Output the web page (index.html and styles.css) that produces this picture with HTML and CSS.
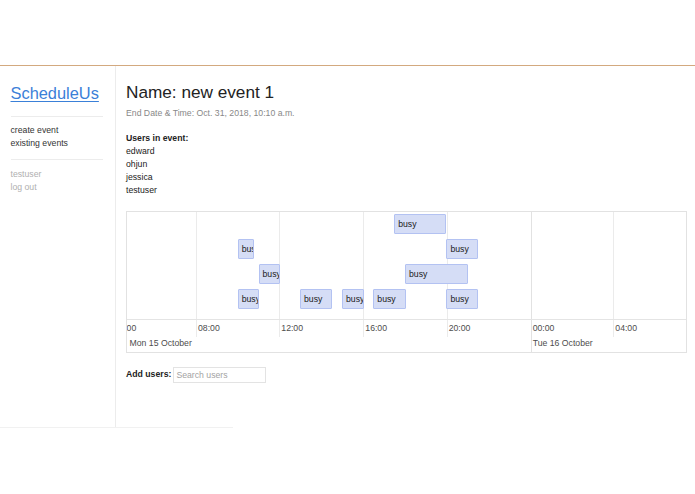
FILE: index.html
```html
<!DOCTYPE html>
<html lang="en">
<head>
<meta charset="utf-8">
<title>ScheduleUs</title>
<link rel="stylesheet" href="styles.css">
</head>
<body>
<header class="topbar"></header>
<div class="layout">
  <aside class="sidebar">
    <a class="logo" href="#">ScheduleUs</a>
    <hr class="rule">
    <nav class="nav">
      <a href="#">create event</a>
      <a href="#">existing events</a>
    </nav>
    <hr class="rule rule-second">
    <div class="account">
      <a href="#">testuser</a>
      <a href="#">log out</a>
    </div>
  </aside>
  <main class="main">
    <h1 class="title">Name: new event 1</h1>
    <p class="meta">End Date &amp; Time: Oct. 31, 2018, 10:10 a.m.</p>
    <div class="users">
      <strong class="users-head">Users in event:</strong>
      <ul class="user-list">
        <li>edward</li>
        <li>ohjun</li>
        <li>jessica</li>
        <li>testuser</li>
      </ul>
    </div>
    <div class="timeline">
      <div class="grid minor" style="left:-14.5px"></div>
      <div class="grid minor" style="left:69px"></div>
      <div class="grid minor" style="left:152.3px"></div>
      <div class="grid minor" style="left:236.3px"></div>
      <div class="grid minor" style="left:319.7px"></div>
      <div class="grid major" style="left:403.7px"></div>
      <div class="grid minor" style="left:486.3px"></div>
      <div class="axis-line"></div>

      <div class="item" style="top:2px;left:267.2px;width:52.2px">busy</div>
      <div class="item" style="top:27px;left:110.7px;width:16px">busy</div>
      <div class="item" style="top:27px;left:319.4px;width:31.5px">busy</div>
      <div class="item" style="top:52px;left:131.5px;width:21.5px">busy</div>
      <div class="item" style="top:52px;left:278px;width:62.6px">busy</div>
      <div class="item" style="top:77px;left:110.7px;width:21.5px">busy</div>
      <div class="item" style="top:77px;left:173px;width:32px">busy</div>
      <div class="item" style="top:77px;left:215px;width:21.7px">busy</div>
      <div class="item" style="top:77px;left:246.3px;width:32.4px">busy</div>
      <div class="item" style="top:77px;left:319.4px;width:31.5px">busy</div>

      <span class="label minor-label" style="left:-12.5px">04:00</span>
      <span class="label minor-label" style="left:71px">08:00</span>
      <span class="label minor-label" style="left:154.3px">12:00</span>
      <span class="label minor-label" style="left:238.3px">16:00</span>
      <span class="label minor-label" style="left:321.7px">20:00</span>
      <span class="label minor-label" style="left:405.7px">00:00</span>
      <span class="label minor-label" style="left:488.3px">04:00</span>
      <span class="label major-label" style="left:2.5px">Mon 15 October</span>
      <span class="label major-label" style="left:405.7px">Tue 16 October</span>
    </div>
    <div class="add-users">
      <label class="add-label" for="search">Add users:</label>
      <input class="search" id="search" type="text" placeholder="Search users">
    </div>
  </main>
</div>
<div class="footer-line"></div>
</body>
</html>
```

FILE: styles.css
```css
* {
  box-sizing: border-box;
}

html, body {
  margin: 0;
  padding: 0;
  background: #ffffff;
}

body {
  font-family: "Liberation Sans", Arial, Helvetica, sans-serif;
  font-size: 8.7px;
  line-height: 13px;
  color: #222222;
}

.topbar {
  height: 66px;
  border-bottom: 1px solid #d3a97f;
}

.layout {
  display: flex;
  height: 361px;
}

.sidebar {
  width: 116px;
  flex: 0 0 116px;
  border-right: 1px solid #ececec;
  padding: 16.7px 12px 0 10.5px;
}

.logo {
  display: block;
  font-size: 16.4px;
  line-height: 20px;
  color: #3a80d8;
  text-decoration: underline;
  text-underline-offset: 1.5px;
}

.rule {
  border: 0;
  border-top: 1px solid #ececec;
  height: 0;
  margin: 13.3px 0 6.8px 0;
}

.rule-second {
  margin: 9.5px 0 7.9px 0;
}

.nav,
.account {
  display: flex;
  flex-direction: column;
}

.nav a {
  color: #333333;
  text-decoration: none;
}

.account a {
  color: #b0b0b0;
  text-decoration: none;
}

.main {
  flex: 1;
  padding: 15.8px 8px 0 10px;
}

.title {
  margin: 0;
  font-size: 17.2px;
  line-height: 20px;
  font-weight: normal;
  color: #222222;
}

.meta {
  margin: 5.2px 0 0 0;
  color: #888888;
}

.users {
  margin-top: 12.2px;
}

.users-head {
  display: block;
  font-weight: bold;
  color: #222222;
}

.user-list {
  list-style: none;
  margin: 0;
  padding: 0;
}

.timeline {
  position: relative;
  margin-top: 13.8px;
  height: 142px;
  border: 1px solid #e2e2e2;
  overflow: hidden;
}

.grid {
  position: absolute;
  top: 0;
  width: 1px;
}

.grid.minor {
  height: 125px;
  background: #ebebeb;
}

.grid.major {
  height: 140px;
  background: #e2e2e2;
}

.axis-line {
  position: absolute;
  left: 0;
  right: 0;
  top: 107px;
  height: 1px;
  background: #e4e4e4;
}

.item {
  position: absolute;
  height: 20px;
  padding: 0 3px;
  line-height: 18px;
  background: #d5ddf6;
  border: 1px solid #b3c2f2;
  border-radius: 1px;
  color: #1a1a1a;
  white-space: nowrap;
  overflow: hidden;
}

.label {
  position: absolute;
  white-space: nowrap;
  color: #4d4d4d;
}

.minor-label {
  top: 110px;
}

.major-label {
  top: 125.2px;
}

.add-users {
  display: flex;
  align-items: center;
  gap: 2px;
  margin-top: 13.7px;
}

.add-label {
  font-weight: bold;
  color: #222222;
}

.search {
  width: 93px;
  height: 16px;
  margin: 0;
  padding: 0 2px;
  border: 1px solid #e3e3e3;
  border-radius: 0;
  font-family: "Liberation Sans", Arial, Helvetica, sans-serif;
  font-size: 8.7px;
  color: #222222;
  background: #ffffff;
  outline: none;
}

.search::placeholder {
  color: #a3a3a3;
}

.footer-line {
  width: 233px;
  height: 1px;
  background: #f1f1f1;
}
```
